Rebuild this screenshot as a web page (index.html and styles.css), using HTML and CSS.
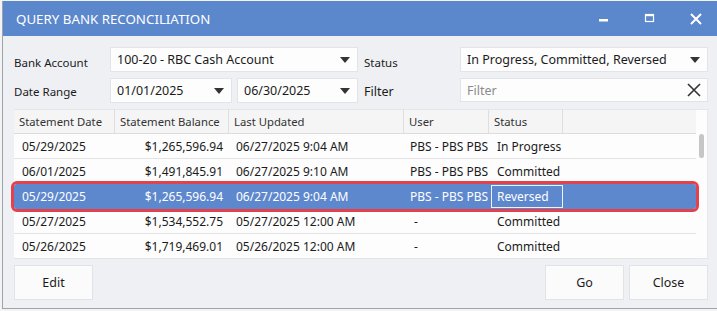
FILE: index.html
```html
<!DOCTYPE html>
<html>
<head>
<title>Query Bank Reconciliation</title>
<link rel="stylesheet" href="styles.css">
</head>
<body>

<div class="window">
  <div class="titlebar">
    <div class="title">QUERY BANK RECONCILIATION</div>
    <div class="controls">
      <span class="ctl"><svg width="12" height="12" viewBox="0 0 12 12"><rect x="1" y="6" width="9" height="2.5" fill="#fff"/></svg></span>
      <span class="ctl"><svg width="12" height="12" viewBox="0 0 12 12"><rect x="1.5" y="1.5" width="8" height="7" fill="none" stroke="#fff" stroke-width="1.2"/><rect x="1" y="1" width="9" height="2.2" fill="#fff"/></svg></span>
      <span class="ctl"><svg width="12" height="12" viewBox="0 0 12 12"><path d="M1 1 L11 11 M11 1 L1 11" stroke="#fff" stroke-width="2"/></svg></span>
    </div>
  </div>

  <div class="content">
    <div class="form">
      <label class="top">Bank Account</label>
      <div class="combo"><span>100-20 - RBC Cash Account</span><i class="arrow"></i></div>
      <label class="top right">Status</label>
      <div class="combo"><span>In Progress, Committed, Reversed</span><i class="arrow"></i></div>

      <label>Date Range</label>
      <div class="dates">
        <div class="combo"><span>01/01/2025</span><i class="arrow"></i></div>
        <div class="combo"><span>06/30/2025</span><i class="arrow"></i></div>
      </div>
      <label class="right big">Filter</label>
      <div class="combo filter">
        <span class="placeholder">Filter</span>
        <svg width="14" height="14" viewBox="0 0 14 14"><path d="M1 1 L13 13 M13 1 L1 13" stroke="#333" stroke-width="1.6"/></svg>
      </div>
    </div>

    <div class="grid">
      <div class="rows">
        <div class="row head">
          <div class="c c1">Statement Date</div>
          <div class="c c2">Statement Balance</div>
          <div class="c c3">Last Updated</div>
          <div class="c c4">User</div>
          <div class="c c5">Status</div>
          <div class="c c6"></div>
        </div>
        <div class="row">
          <div class="c c1">05/29/2025</div>
          <div class="c c2 num">$1,265,596.94</div>
          <div class="c c3">06/27/2025 9:04 AM</div>
          <div class="c c4">PBS - PBS PBS</div>
          <div class="c c5">In Progress</div>
          <div class="c c6"></div>
        </div>
        <div class="row">
          <div class="c c1">06/01/2025</div>
          <div class="c c2 num">$1,491,845.91</div>
          <div class="c c3">06/27/2025 9:10 AM</div>
          <div class="c c4">PBS - PBS PBS</div>
          <div class="c c5">Committed</div>
          <div class="c c6"></div>
        </div>
        <div class="row selected">
          <div class="c c1">05/29/2025</div>
          <div class="c c2 num">$1,265,596.94</div>
          <div class="c c3">06/27/2025 9:04 AM</div>
          <div class="c c4">PBS - PBS PBS</div>
          <div class="c c5 focus">Reversed</div>
          <div class="c c6"></div>
        </div>
        <div class="row">
          <div class="c c1">05/27/2025</div>
          <div class="c c2 num">$1,534,552.75</div>
          <div class="c c3">05/27/2025 12:00 AM</div>
          <div class="c c4 dash">-</div>
          <div class="c c5">Committed</div>
          <div class="c c6"></div>
        </div>
        <div class="row">
          <div class="c c1">05/26/2025</div>
          <div class="c c2 num">$1,719,469.01</div>
          <div class="c c3">05/26/2025 12:00 AM</div>
          <div class="c c4 dash">-</div>
          <div class="c c5">Committed</div>
          <div class="c c6"></div>
        </div>
      </div>
      <div class="scrollbar"><div class="thumb"></div></div>
    </div>

    <div class="buttons">
      <button>Edit</button>
      <div class="spacer"></div>
      <button>Go</button>
      <button>Close</button>
    </div>
  </div>
</div>

</body>
</html>
```

FILE: styles.css
```css
body {
  margin: 0;
  background-color: #f3f3f3;
  font-family: "Noto Sans", "Open Sans", sans-serif;
  color: #1b1b1b;
}

.window {
  margin: 1px 0 0 2px;
  height: 307px;
  border-left: 1px solid #9ca4ae;
  border-bottom: 1px solid #9ca4ae;
  background-color: #eff0f4;
}

.titlebar {
  height: 35px;
  background-color: #5b87cd;
  display: flex;
  align-items: center;
  padding-left: 13px;
  color: #fff;
}

.title {
  flex: 1;
  font-size: 13.3px;
  padding-top: 1px;
}

.controls {
  display: flex;
  gap: 34px;
  padding-right: 15px;
}

.ctl {
  display: flex;
  width: 12px;
  height: 12px;
}

.content {
  padding: 11px 8px 0 11px;
}

.form {
  display: grid;
  grid-template-columns: 96px 248px 102px 248px;
  grid-auto-rows: 25px;
  row-gap: 6px;
  width: 694px;
}

.form label {
  font-size: 11.5px;
  display: flex;
  align-items: center;
  padding-top: 1px;
}

.form label.top {
  padding-top: 5px;
}

.form label.right {
  padding-left: 6px;
}

.form label.big {
  font-size: 12.5px;
}

.combo {
  display: flex;
  align-items: center;
  background-color: #fdfdfd;
  border: 1px solid #e2e4e8;
  padding: 0 6px;
  font-size: 12.5px;
  box-sizing: border-box;
  height: 25px;
}

.combo span {
  flex: 1;
}

.arrow {
  width: 0;
  height: 0;
  border-left: 5.5px solid transparent;
  border-right: 5.5px solid transparent;
  border-top: 6px solid #333;
  margin-right: 1px;
}

.dates {
  display: grid;
  grid-template-columns: 122px 121px;
  column-gap: 5px;
}

.combo.filter {
  height: 24px;
  padding-right: 6px;
}

.placeholder {
  color: #8a8a8a;
}

.grid {
  display: flex;
  margin-top: 6px;
  width: 694px;
  height: 150px;
  background-color: #fdfdfd;
  border: 1px solid #e4e6ea;
  border-left: none;
  box-sizing: border-box;
}

.rows {
  flex: 1;
}

.row {
  display: flex;
  height: 25px;
  border-bottom: 1px solid #e3e3e3;
  box-sizing: border-box;
  font-size: 12px;
  align-items: center;
}

.row.head {
  height: 24px;
  background-color: #f5f5f5;
  border-bottom: 1px solid #dcdcdc;
  font-size: 11.3px;
  color: #333;
}

.c {
  box-sizing: border-box;
  height: 100%;
  display: flex;
  align-items: center;
  white-space: nowrap;
}

.head .c {
  border-right: 1px solid #dedede;
  padding-left: 5px;
}

.head .c6 {
  border-right: none;
}

.c1 { width: 101px; padding-left: 8px; }
.c2 { width: 114px; padding-right: 6px; }
.c3 { width: 175px; padding-left: 7px; }
.c4 { width: 85px; padding-left: 6px; }
.c5 { width: 74px; padding-left: 8px; }
.c6 { flex: 1; }

.num {
  justify-content: flex-end;
}

.head .c2 {
  justify-content: flex-start;
}

.dash {
  padding-left: 10px;
}

.row.selected {
  background-color: #5e88cd;
  color: #fff;
  border-bottom-color: #5e88cd;
  outline: 3px solid #e3414b;
  border-radius: 3px;
}

.focus {
  border: 1px solid #eef2fa;
  height: 23px;
  margin-left: 2px;
  width: 72px;
  padding-left: 5px;
}

.scrollbar {
  width: 11px;
  padding-top: 24px;
  display: flex;
  justify-content: center;
}

.thumb {
  width: 5px;
  height: 24px;
  border-radius: 3px;
  background-color: #c6c6c6;
}

.buttons {
  display: flex;
  gap: 5px;
  margin-top: 6px;
  width: 694px;
}

.spacer {
  flex: 1;
}

button {
  width: 79px;
  height: 35px;
  background-color: #fbfbfb;
  border: 1px solid #e1e3e7;
  font-family: "Noto Sans", "Open Sans", sans-serif;
  font-size: 12.5px;
  color: #1b1b1b;
  cursor: pointer;
}
```
